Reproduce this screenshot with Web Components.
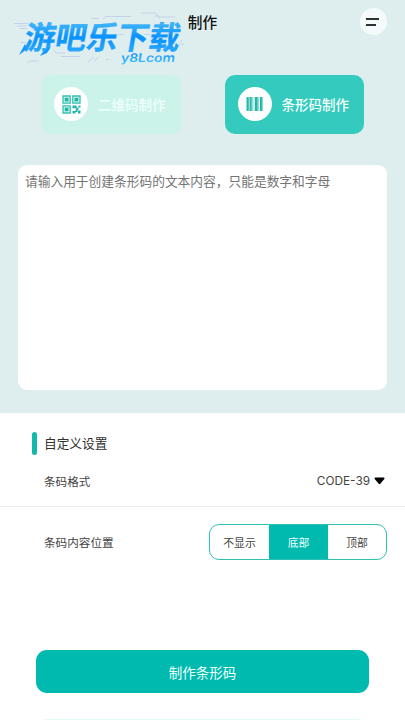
<!DOCTYPE html>
<html lang="zh-CN">
<head>
<meta charset="utf-8">
<title>制作</title>
<style>
html,body{margin:0;padding:0}
body{width:405px;height:720px;overflow:hidden;background:#fff;font-family:"Noto Sans CJK SC",sans-serif;color:#444}
</style>
</head>
<body>
<maker-app></maker-app>
<script>
const define = (name, html) => customElements.define(name, class extends HTMLElement {
  constructor() {
    super();
    const t = document.createElement('template');
    t.innerHTML = html;
    this.attachShadow({mode: 'open'}).append(t.content.cloneNode(true));
  }
});

define('brand-mark', `<style>:host{position:absolute;left:0;top:0;width:230px;height:90px}svg{display:block;overflow:visible}
text{font-family:"Noto Sans CJK SC",sans-serif}</style>
<svg width="230" height="90" viewBox="0 0 230 90">
<defs><linearGradient id="g" x1="0" y1="0" x2="0" y2="1"><stop offset=".25" stop-color="#3db5fa"/><stop offset=".55" stop-color="#0892ff"/><stop offset=".85" stop-color="#28a9fc"/></linearGradient>
<linearGradient id="h" x1="0" y1="0" x2="0" y2="1"><stop offset=".2" stop-color="#148fff"/><stop offset=".9" stop-color="#46c3f5"/></linearGradient></defs>
<g fill="none" stroke="#b4bfe6" stroke-width=".7" opacity=".85">
<path d="M14 23.500H29M17 26H27M20 28.500H27M20 42.500H26M91 18.500H99M103 19l3-2.500H131M141 13h15l3 4H175M154 16h4l2 3M118 34.500H124M144 34.500H150M54 50l2 3H65M61 56.500H80M27 63l3-2H39M94 61l5-4M88 62l6-5M106 60l3-1M176 49l6-9M181 45l3-1"/></g>
<text transform="translate(22.500 49) skewX(-10)" font-size="31.500" font-weight="700" textLength="156" lengthAdjust="spacingAndGlyphs" fill="url(#g)" stroke="#1598fd" stroke-width=".3">游吧乐下载</text>
<path d="M25 44l-6 11 8-6zM51 46l-4 7-7 3 2-3z" fill="#1399fd"/>
<text transform="translate(120.500 61.500) skewX(-8)" style="font-family:Inter,sans-serif" font-size="12" font-weight="600" textLength="54" lengthAdjust="spacingAndGlyphs" fill="url(#h)">y8Lcom</text>
</svg>`);

define('menu-button', `<style>:host{display:block;width:27px;height:27px;border-radius:50%;background:#f5fbfa}svg{display:block}</style>
<svg width="27" height="27" viewBox="0 0 27 27"><path d="M6 11H19M6 17H16" stroke="#2b3233" stroke-width="2"/></svg>`);

define('title-bar', `<style>:host{display:grid;grid-template-columns:1fr auto 1fr;align-items:center;height:43px;padding:0 18px}
h1{grid-column:2;margin:0;font-size:14.700px;line-height:22px;font-weight:500;color:#111;white-space:nowrap}menu-button{justify-self:end}</style>
<h1><slot></slot></h1><menu-button></menu-button>`);

define('mode-card', `<style>:host{display:flex;align-items:center;box-sizing:border-box;width:139.500px;height:58.500px;border-radius:10px;padding-left:13px;gap:10px;background:var(--card);color:var(--ink);font-size:13.500px;font-weight:500;line-height:20px;white-space:nowrap}
i{display:grid;place-items:center;width:34px;height:34px;border-radius:50%;background:#fff}</style>
<i><slot name="icon"></slot></i><span><slot></slot></span>`);

define('qr-icon', `<style>:host{display:block;width:19px;height:19px}svg{display:block}</style>
<svg width="19" height="19" viewBox="0 0 19 19"><g fill="#d8f6f1" stroke="#35bfb2" stroke-width="1.300"><path d="M1 1h7.200v7.200H1zM10.800 1H18v7.200h-7.200zM1 10.800h7.200V18H1z"/></g>
<path fill="#20b5a8" d="M2.700 2.700h3.800v3.800H2.700zM12.500 2.700h3.800v3.800h-3.800zM2.700 12.500h3.800v3.800H2.700zM10.500 10.500h4v2h2v2.300h-2.300v-1.500h-3.700zM16.500 10.500h2v2h-2zM10.500 16h3v2.500h-3zM16 15.500h2.500v3H16zM13.500 14.500h2V17h-2z"/></svg>`);

define('bar-icon', `<style>:host{display:block;width:17px;height:14px}svg{display:block}</style>
<svg width="17" height="14" viewBox="0 0 17 14"><path fill="#25b8ab" d="M.5 0h2.300v14H.5zM3.500 0h2.200v14H3.500zM6.500 0h.7v14h-.7zM8.700 0h3v14h-3zM12.500 0h.6v14h-.6zM14 0h2.500v14H14z"/></svg>`);

define('content-box', `<style>:host{display:block;box-sizing:border-box;margin:0 18px;height:225px;border-radius:9px;background:#fff;padding:6px 7px;font-size:12.730px;line-height:20px;color:#747474;white-space:nowrap}</style><slot></slot>`);

define('section-title', `<style>:host{display:flex;align-items:center;gap:7px;height:23px;padding-left:32px;font-size:12.700px;line-height:20px;color:#303030}
i{width:5px;height:23px;border-radius:3px;background:#13b9ab}</style><i></i><span><slot></slot></span>`);

define('setting-row', `<style>:host{display:flex;align-items:center;justify-content:space-between;padding:0 18px 0 44px;font-size:11.600px;line-height:18px;color:#444}</style>
<span><slot></slot></span><slot name="value"></slot>`);

define('format-select', `<style>:host{display:flex;align-items:center;gap:3.500px;margin-right:2.500px;line-height:18px;color:#444}svg{display:block}
span{font-family:Inter,sans-serif;font-size:11.800px}</style>
<span><slot></slot></span><svg width="11" height="8" viewBox="0 0 11 8"><path fill="#000" d="M1 .5h9q1 .6.300 1.500L6.500 6.500q-1 1-2 0L.7 2Q0 1 1 .5z"/></svg>`);

define('position-tabs', `<style>:host{display:grid;grid-template-columns:59px 59px 1fr;box-sizing:border-box;width:178px;height:36px;border:1.400px solid #32bfb3;border-radius:10px;overflow:hidden;font-size:10.800px;line-height:34px;text-align:center}
::slotted([active]){background:#00baaf;color:#effffd}</style><slot></slot>`);

define('primary-button', `<style>:host{display:grid;place-items:center;margin:0 36px;height:43px;border-radius:11px;background:#00bab0;color:#eefffd;font-size:13.500px;line-height:20px}</style><slot></slot>`);

define('maker-app', `<style>
:host{display:flex;flex-direction:column;width:405px;height:720px;position:relative;overflow:hidden}
header{height:413px;background:#deeeee;flex:none}
nav{display:flex;justify-content:space-between;padding:32px 41px 31.500px 41px}
main{display:flex;flex-direction:column;padding-top:18.500px}
.fmt{height:24px;margin-top:14px}
.line{height:1px;background:#ebebeb;margin-top:13.500px}
.pos{margin-top:17px}
primary-button{margin-top:90px}
.foot{height:1px;margin:26px 44px 0;background:#e4fbf6}
</style>
<header><title-bar>制作</title-bar>
<nav><mode-card style="--card:#cbf3ea;--ink:#effffc">二维码制作<qr-icon slot="icon"></qr-icon></mode-card>
<mode-card style="--card:#34cabd;--ink:#f4fffd">条形码制作<bar-icon slot="icon"></bar-icon></mode-card></nav>
<content-box>请输入用于创建条形码的文本内容，只能是数字和字母</content-box></header>
<main><section-title>自定义设置</section-title>
<setting-row class="fmt">条码格式<format-select slot="value">CODE-39</format-select></setting-row>
<div class="line"></div>
<setting-row class="pos">条码内容位置<position-tabs slot="value"><span>不显示</span><span active>底部</span><span>顶部</span></position-tabs></setting-row>
<primary-button>制作条形码</primary-button><div class="foot"></div></main>
<brand-mark></brand-mark>`);
</script>
</body>
</html>
